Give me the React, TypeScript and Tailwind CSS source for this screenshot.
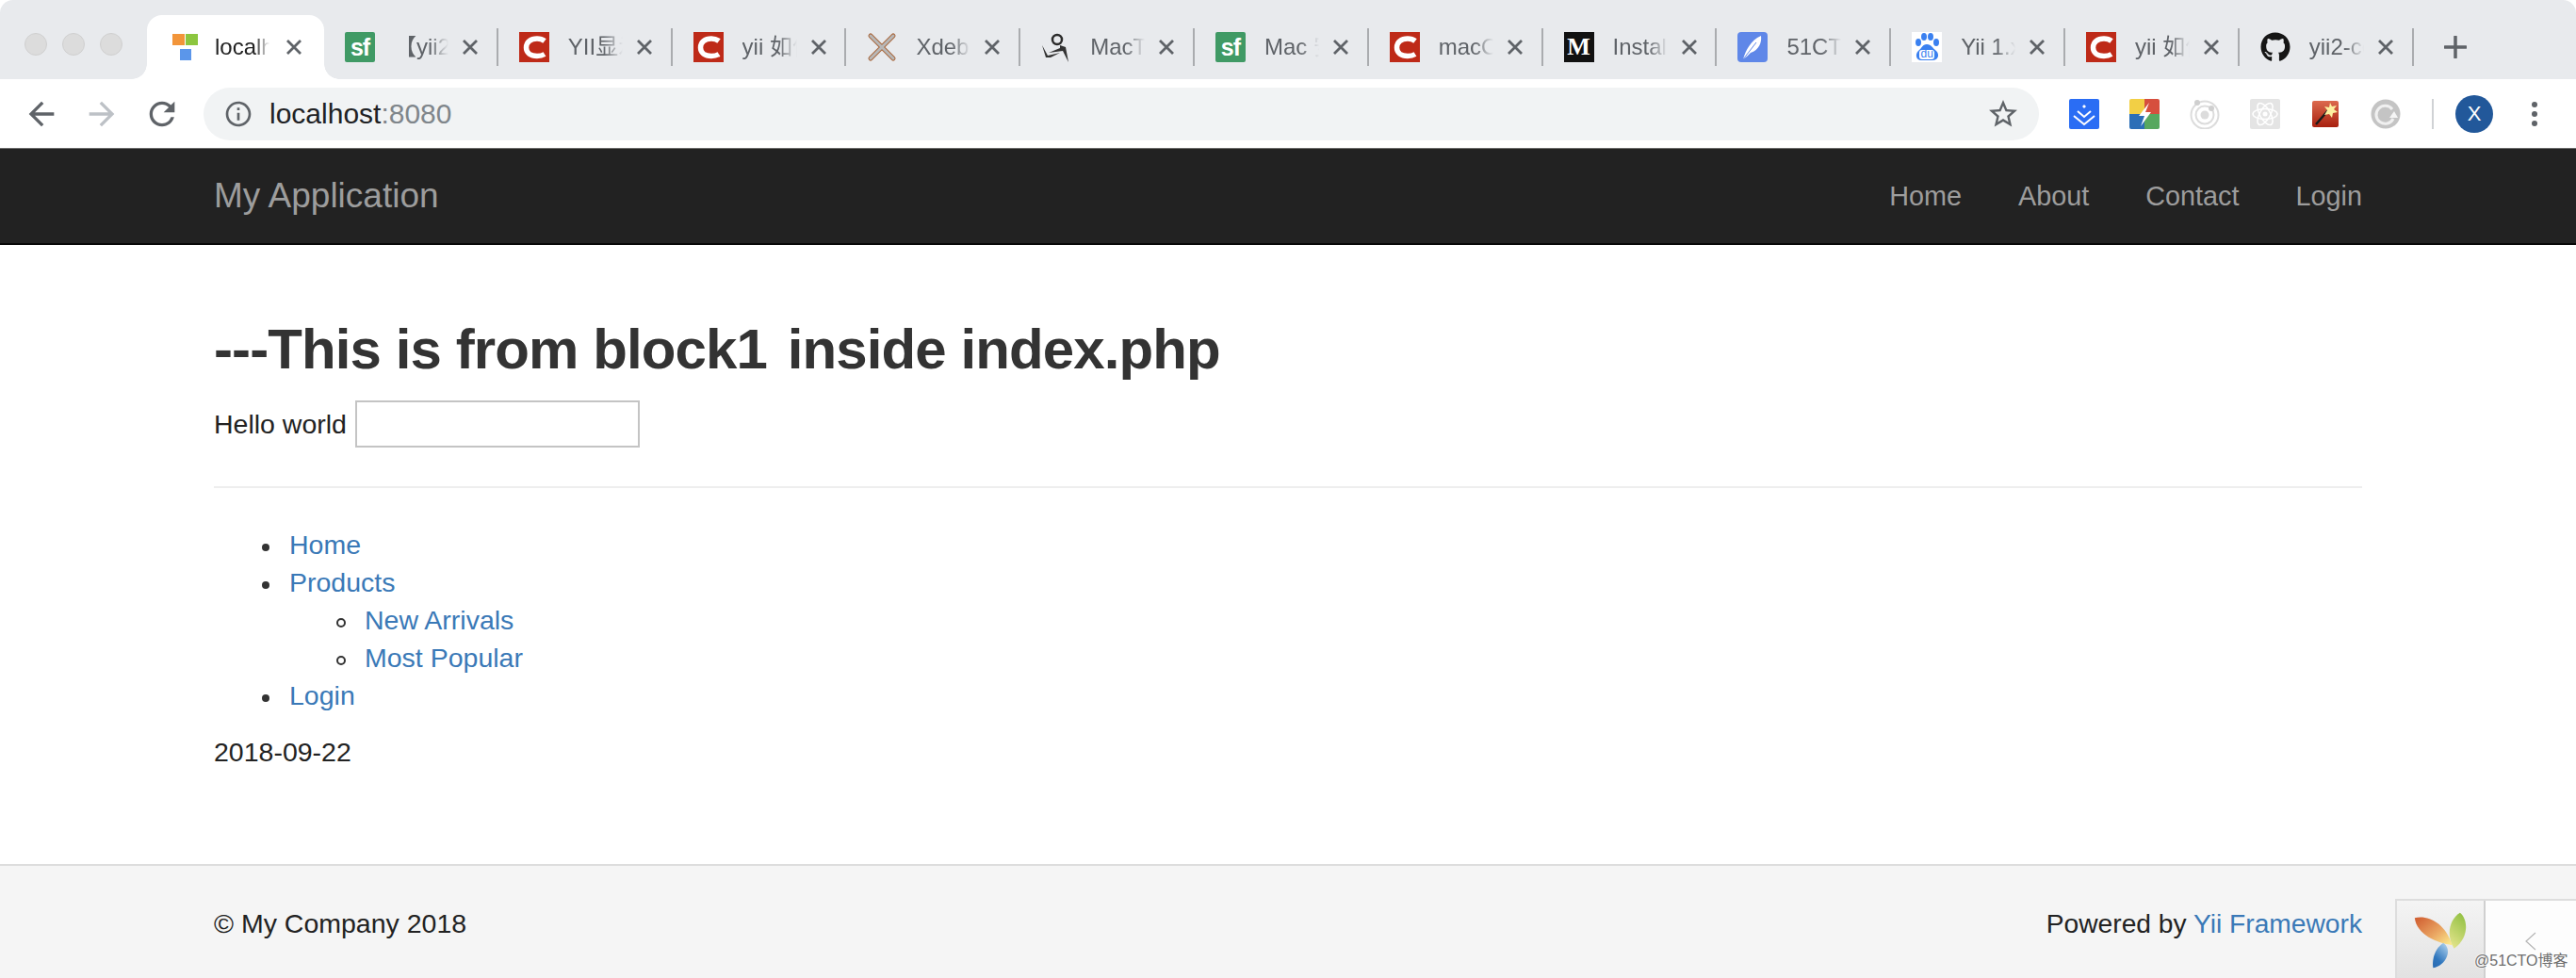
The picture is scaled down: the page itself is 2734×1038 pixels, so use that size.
import React from "react";
import { FaGithub } from "react-icons/fa";

const CIcon = () => (
  <svg viewBox="0 0 32 32" className="w-8 h-8 block">
    <rect width="32" height="32" fill="#be2a18" />
    <path d="M27 9.5C24.5 7.5 21.5 7 19 7 12 7 7.5 11 7.5 16.5S12 25.5 19 25.5c3 0 5.500-.5 8-2" fill="none" stroke="#fff" strokeWidth="5.500" />
  </svg>
);
const SfIcon = () => (
  <div className="w-8 h-8 rounded-[2px] bg-[#409a65] flex items-center justify-center text-white font-bold text-[25px] leading-none tracking-[-1px]">sf</div>
);
const Squares = () => (
  <svg viewBox="0 0 32 32" className="w-8 h-8 block">
    <rect x="1" y="2" width="13" height="12" fill="#f2953a" />
    <rect x="15" y="2" width="13" height="12" fill="#8cc63f" />
    <rect x="9" y="18" width="12" height="12" fill="#5b96ea" />
  </svg>
);
const XDebug = () => (
  <svg viewBox="0 0 32 32" className="w-8 h-8 block">
    <path d="M4 4L28 28M28 4L4 28" stroke="#a9683d" strokeWidth="5" strokeLinecap="round" />
    <path d="M4 4L28 28M28 4L4 28" stroke="#b8b8b8" strokeWidth="3" strokeLinecap="round" />
  </svg>
);
const MacIcon = () => (
  <svg viewBox="0 0 32 32" className="w-8 h-8 block">
    <circle cx="17" cy="8" r="5" fill="none" stroke="#2b2b2b" strokeWidth="2.500" />
    <path d="M1 14L7 25L20 22L10 27L5 27ZM20 14L26 16L29 32L23 20L8 22L20 17Z" fill="#333" />
  </svg>
);
const MediumIcon = () => (
  <div className="w-8 h-8 bg-[#111] flex items-center justify-center text-white font-bold text-[26px] leading-none font-['Liberation_Serif',serif]">M</div>
);
const Feather = () => (
  <svg viewBox="0 0 32 32" className="w-8 h-8 block">
    <rect width="32" height="32" rx="4" fill="#5f87e8" />
    <path d="M6 29C9 19 14 9 25 4C26 11 23 19 14 22C12 24 10 26 6 29Z" fill="#fff" />
    <path d="M6 29L20 11" stroke="#5f87e8" strokeWidth="1" />
  </svg>
);
const Baidu = () => (
  <div className="w-8 h-8 bg-white relative overflow-hidden">
    <svg viewBox="0 0 32 32" className="w-8 h-8 block">
      <ellipse cx="7" cy="11" rx="3" ry="4" fill="#3a80f0" />
      <ellipse cx="13" cy="5" rx="3" ry="4" fill="#3a80f0" />
      <ellipse cx="20" cy="5" rx="3" ry="4" fill="#3a80f0" />
      <ellipse cx="26" cy="11" rx="3" ry="4" fill="#3a80f0" />
      <path d="M16 13C11 13 11 17 7 20C3 24 5 30 10 30H22C28 30 30 24 26 20C22 17 21 13 16 13Z" fill="#3a80f0" />
      <rect x="8" y="19" width="16" height="10" rx="3" fill="#fff" />
    </svg>
    <span className="absolute left-0 right-0 top-[17px] text-center text-[12px] leading-[12px] text-[#3a80f0]">du</span>
  </div>
);
const Github = () => <FaGithub className="w-8 h-8 block text-[#161616]" />;

const tabs: { t: string; i: React.ReactNode }[] = [
  { t: "【yii2 显示", i: <SfIcon /> },
  { t: "YII显示错误", i: <CIcon /> },
  { t: "yii 如何使用", i: <CIcon /> },
  { t: "Xdebug", i: <XDebug /> },
  { t: "MacTalk", i: <MacIcon /> },
  { t: "Mac 安装", i: <SfIcon /> },
  { t: "macOS", i: <CIcon /> },
  { t: "Install", i: <MediumIcon /> },
  { t: "51CTO", i: <Feather /> },
  { t: "Yii 1.x", i: <Baidu /> },
  { t: "yii 如何", i: <CIcon /> },
  { t: "yii2-core", i: <Github /> },
];

const Close = () => (
  <svg viewBox="0 0 18 18" className="w-[18px] h-[18px] shrink-0 block">
    <path d="M2 2L16 16M16 2L2 16" stroke="#5f6368" strokeWidth="2.800" />
  </svg>
);

const Ion = () => (
  <svg viewBox="0 0 32 32" className="w-8 h-8 block">
    <circle cx="16" cy="17" r="14.500" fill="none" stroke="#dcdcdc" strokeWidth="2" />
    <circle cx="16" cy="17" r="9.500" fill="none" stroke="#dcdcdc" strokeWidth="2" />
    <circle cx="16" cy="17" r="4.500" fill="#dcdcdc" />
    <circle cx="8" cy="4" r="3" fill="#cfcfcf" />
    <circle cx="23" cy="10" r="3" fill="#cfcfcf" />
  </svg>
);
const ReactExt = () => (
  <svg viewBox="0 0 32 32" className="w-8 h-8 block">
    <rect width="32" height="32" rx="2" fill="#e4e4e4" />
    <g fill="none" stroke="#fff" strokeWidth="1.500">
      <ellipse cx="16" cy="16" rx="13" ry="5.500" />
      <ellipse cx="16" cy="16" rx="13" ry="5.500" transform="rotate(60 16 16)" />
      <ellipse cx="16" cy="16" rx="13" ry="5.500" transform="rotate(120 16 16)" />
    </g>
    <circle cx="16" cy="16" r="2.500" fill="#fff" />
  </svg>
);

const disc = "relative before:absolute before:left-[-29px] before:top-[19px] before:w-[8px] before:h-[8px] before:rounded-full before:bg-[#333]";
const ring = "relative before:absolute before:left-[-30px] before:top-[18px] before:w-[10px] before:h-[10px] before:rounded-full before:border-2 before:border-[#333]";

export default function App() {
  return (
    <div className="w-full h-[1038px] overflow-hidden flex flex-col relative bg-white text-[28.500px] leading-[40px] text-[#333] font-['Liberation_Sans','Noto_Sans_CJK_SC',sans-serif]">
      {/* tab strip */}
      <div className="h-[84px] bg-[#e8eaed] rounded-t-[14px] flex items-stretch pt-[16px] shrink-0">
        <div className="flex items-center gap-[16px] pl-[26px] shrink-0 w-[156px] pb-[6px]">
          {[0, 1, 2].map((k) => (
            <div key={k} className="w-6 h-6 rounded-full bg-[#dcdcdc] border border-[#d0d0d0]" />
          ))}
        </div>
        {/* active tab */}
        <div className="relative w-[188px] shrink-0 bg-white rounded-t-[16px] flex items-center pl-[26px] text-[24px] text-[#222]">
          <span className="absolute left-[-16px] bottom-0 w-4 h-4 bg-[radial-gradient(circle_at_0_0,#e8eaed_15.500px,#fff_16px)]" />
          <span className="absolute right-[-16px] bottom-0 w-4 h-4 bg-[radial-gradient(circle_at_100%_0,#e8eaed_15.500px,#fff_16px)]" />
          <Squares />
          <span className="ml-[14px] w-[58px] overflow-hidden whitespace-nowrap [mask-image:linear-gradient(to_right,#000_72%,transparent)]">localhost</span>
          <span className="ml-[17px]"><Close /></span>
        </div>
        {tabs.map((tab, n) => (
          <div key={n} className="w-[184.800px] shrink-0 flex items-center pl-[22px] text-[24px] text-[#5f6368]">
            <span className="w-8 h-8 shrink-0">{tab.i}</span>
            <span className="ml-[20px] w-[58px] shrink-0 overflow-hidden whitespace-nowrap [mask-image:linear-gradient(to_right,#000_65%,transparent)]">{tab.t}</span>
            <span className="ml-[14px]"><Close /></span>
            <span className="ml-auto w-[2px] h-[40px] bg-[#aaacaf]" />
          </div>
        ))}
        <svg viewBox="0 0 24 24" className="w-6 h-6 ml-[32px] self-center shrink-0">
          <path d="M12 1V23M1 12H23" stroke="#5f6368" strokeWidth="3.500" strokeLinecap="round" />
        </svg>
      </div>

      {/* toolbar */}
      <div className="h-[73px] shrink-0 bg-white flex items-center">
        <svg viewBox="0 0 24 24" className="w-10 h-10 ml-[24px] shrink-0" fill="#5f6368"><path d="M20 11H7.830l5.590-5.590L12 4l-8 8 8 8 1.410-1.410L7.830 13H20v-2z" /></svg>
        <svg viewBox="0 0 24 24" className="w-10 h-10 ml-[24px] shrink-0" fill="#bdc1c6"><path d="M4 11h12.170l-5.590-5.590L12 4l8 8-8 8-1.410-1.410L16.170 13H4v-2z" /></svg>
        <svg viewBox="0 0 24 24" className="w-10 h-10 ml-[24px] shrink-0" fill="#5f6368"><path d="M17.650 6.350A7.958 7.958 0 0 0 12 4c-4.420 0-7.990 3.580-7.990 8s3.570 8 7.990 8c3.730 0 6.840-2.550 7.730-6h-2.080A5.990 5.990 0 0 1 12 18c-3.310 0-6-2.690-6-6s2.690-6 6-6c1.660 0 3.140.690 4.220 1.780L13 11h7V4l-2.350 2.350z" /></svg>
        <div className="ml-[24px] w-[1948px] h-[56px] shrink-0 rounded-full bg-[#f1f3f4] flex items-center pl-[21px] pr-[20px]">
          <svg viewBox="0 0 24 24" className="w-8 h-8 shrink-0" fill="#5f6368"><path d="M11 7h2v2h-2zm0 4h2v6h-2zm1-9C6.480 2 2 6.480 2 12s4.480 10 10 10 10-4.480 10-10S17.520 2 12 2zm0 18c-4.410 0-8-3.590-8-8s3.590-8 8-8 8 3.590 8 8-3.590 8-8 8z" /></svg>
          <span className="ml-[17px] text-[30px] text-[#202124]">localhost<span className="text-[#80868b]">:8080</span></span>
          <svg viewBox="0 0 24 24" className="w-[36px] h-[36px] ml-auto shrink-0" fill="#5f6368"><path d="M22 9.240l-7.190-.620L12 2 9.190 8.630 2 9.240l5.460 4.730L5.820 21 12 17.270 18.180 21l-1.630-7.030L22 9.240zM12 15.400l-3.760 2.270 1-4.280-3.320-2.880 4.380-.380L12 6.100l1.710 4.040 4.380.380-3.320 2.880 1 4.280L12 15.400z" /></svg>
        </div>
        <div className="ml-[32px] flex items-center gap-[32px] shrink-0">
          <svg viewBox="0 0 32 32" className="w-8 h-8 block">
            <rect width="32" height="32" rx="2" fill="#2a6df4" />
            <path d="M16 6L18 8 16 10 14 8Z" fill="#fff" />
            <path d="M9 13L16 19 23 13M5 18L16 27 27 18" fill="none" stroke="#fff" strokeWidth="2" />
          </svg>
          <svg viewBox="0 0 32 32" className="w-8 h-8 block">
            <path d="M2 0H16V16H0V2Q0 0 2 0Z" fill="#f2cf45" />
            <path d="M16 0H30Q32 0 32 2V16H16Z" fill="#d64f3e" />
            <path d="M0 16H16V32H2Q0 32 0 30Z" fill="#2c6fb7" />
            <path d="M16 16H32V30Q32 32 30 32H16Z" fill="#57a85f" />
            <path d="M21 4L10 18H16L12 29L23 14H17Z" fill="#fff" />
          </svg>
          <Ion />
          <ReactExt />
          <div className="w-8 h-8 flex items-center justify-center">
            <svg viewBox="0 0 28 28" className="w-7 h-7 block">
              <defs><linearGradient id="wand" x1="0" y1="0" x2="0" y2="1"><stop offset="0" stopColor="#dc6a4e" /><stop offset="1" stopColor="#a8200f" /></linearGradient></defs>
              <rect width="28" height="28" rx="2" fill="url(#wand)" />
              <path d="M4 25L17 10" stroke="#1a1a1a" strokeWidth="2.500" />
              <path d="M19 2L21 6 26 5 23 9 27 12 22 13 21 18 18 14 13 15 16 10 13 6 18 7Z" fill="#fdf0a0" />
            </svg>
          </div>
          <svg viewBox="0 0 32 32" className="w-8 h-8 block">
            <circle cx="16" cy="16" r="15.500" fill="#c4c4c4" />
            <path d="M23 11A9.500 9.500 0 1 0 24 21" fill="none" stroke="#f0f0f0" strokeWidth="3" />
            <path d="M20 20L25 13 29 20Z" fill="#f5f5f5" />
          </svg>
        </div>
        <div className="ml-[33px] w-[2px] h-[32px] bg-[#d0d2d5] shrink-0" />
        <div className="ml-[23px] w-10 h-10 rounded-full bg-[#22589a] text-white text-[22px] leading-none flex items-center justify-center shrink-0">X</div>
        <div className="ml-[41px] flex flex-col gap-[4px] shrink-0">
          {[0, 1, 2].map((k) => (
            <span key={k} className="w-[6px] h-[6px] rounded-full bg-[#5f6368]" />
          ))}
        </div>
      </div>

      {/* navbar */}
      <div className="h-[103px] shrink-0 bg-[#222] border-t border-t-[#6b6b6b] border-b-2 border-b-[#080808] px-[227px] flex items-center justify-between text-[#9d9d9d]">
        <span className="text-[37px]">My Application</span>
        <div className="flex gap-[60px] text-[28.800px]">
          <span>Home</span>
          <span>About</span>
          <span>Contact</span>
          <span>Login</span>
        </div>
      </div>

      {/* content */}
      <div className="flex-1 min-h-0 px-[227px] pt-[78px]">
        <h1 className="text-[60px] leading-[66px] font-bold text-[#333] tracking-[-0.900px]">---This is from block1 <span className="ml-[6px]">inside index.php</span></h1>
        <div className="flex items-center mt-[21px] h-[50px] text-[#222]">
          <span>Hello world</span>
          <input className="ml-[9px] w-[302px] h-[50px] border-2 border-[#c4c4c4] bg-white" />
        </div>
        <div className="mt-[41px] h-[2px] bg-[#eee]" />
        <ul className="mt-[40px] pl-[80px] text-[#3a79b7]">
          <li className={disc}>Home</li>
          <li className={disc}>
            Products
            <ul className="pl-[80px]">
              <li className={ring}>New Arrivals</li>
              <li className={ring}>Most Popular</li>
            </ul>
          </li>
          <li className={disc}>Login</li>
        </ul>
        <p className="mt-[20px] text-[#222]">2018-09-22</p>
      </div>

      {/* footer */}
      <div className="h-[121px] shrink-0 bg-[#f5f5f5] border-t-2 border-t-[#ddd] pt-[2px] px-[227px] flex items-center justify-between text-[#222]">
        <span>© My Company 2018</span>
        <span className="text-[28.200px]">Powered by <span className="text-[#3a79b7]">Yii Framework</span></span>
      </div>

      {/* debug toolbar */}
      <div className="absolute right-0 bottom-0 w-[192px] h-[84px] flex border-t-2 border-l-2 border-[#ddd]">
        <div className="w-[94px] h-full border-r-2 border-r-[#d0d0d0] bg-[linear-gradient(to_bottom,#f4f4f4,#e2e2e2)] flex items-center justify-center">
          <svg viewBox="90 60 180 190" className="w-[60px] h-[63px]">
            <defs>
              <linearGradient id="yo" x1="0" y1="0" x2="1" y2="0.900"><stop offset="0" stopColor="#cf5a2e" /><stop offset="0.600" stopColor="#eaa663" /><stop offset="1" stopColor="#fbe88a" /></linearGradient>
              <linearGradient id="yg" x1="0.700" y1="0" x2="0.300" y2="1"><stop offset="0" stopColor="#93c144" /><stop offset="1" stopColor="#e2e38a" /></linearGradient>
              <linearGradient id="yb" x1="0.800" y1="0" x2="0.200" y2="1"><stop offset="0" stopColor="#a8cdea" /><stop offset="0.700" stopColor="#2f76bd" /><stop offset="1" stopColor="#2a6cb3" /></linearGradient>
            </defs>
            <path d="M98 85C140 75 195 100 218 172C170 165 105 140 98 85Z" fill="url(#yo)" />
            <path d="M243 68C270 90 272 150 224 183C198 140 208 90 243 68Z" fill="url(#yg)" />
            <path d="M190 165C222 190 195 238 157 245C152 215 165 180 190 165Z" fill="url(#yb)" />
          </svg>
        </div>
        <div className="flex-1 bg-[#fdfdfd] flex items-start justify-center pt-[33px]">
          <svg viewBox="0 0 12 20" className="w-3 h-5"><path d="M11 1L1 10L11 19" fill="none" stroke="#b5b5b5" strokeWidth="1.200" /></svg>
        </div>
      </div>
      <span className="absolute left-[2626px] top-[1008px] text-[16px] leading-[24px] text-[#6d6d6d] [text-shadow:0_0_2px_#fff,0_0_2px_#fff] whitespace-nowrap">@51CTO博客</span>
    </div>
  );
}
